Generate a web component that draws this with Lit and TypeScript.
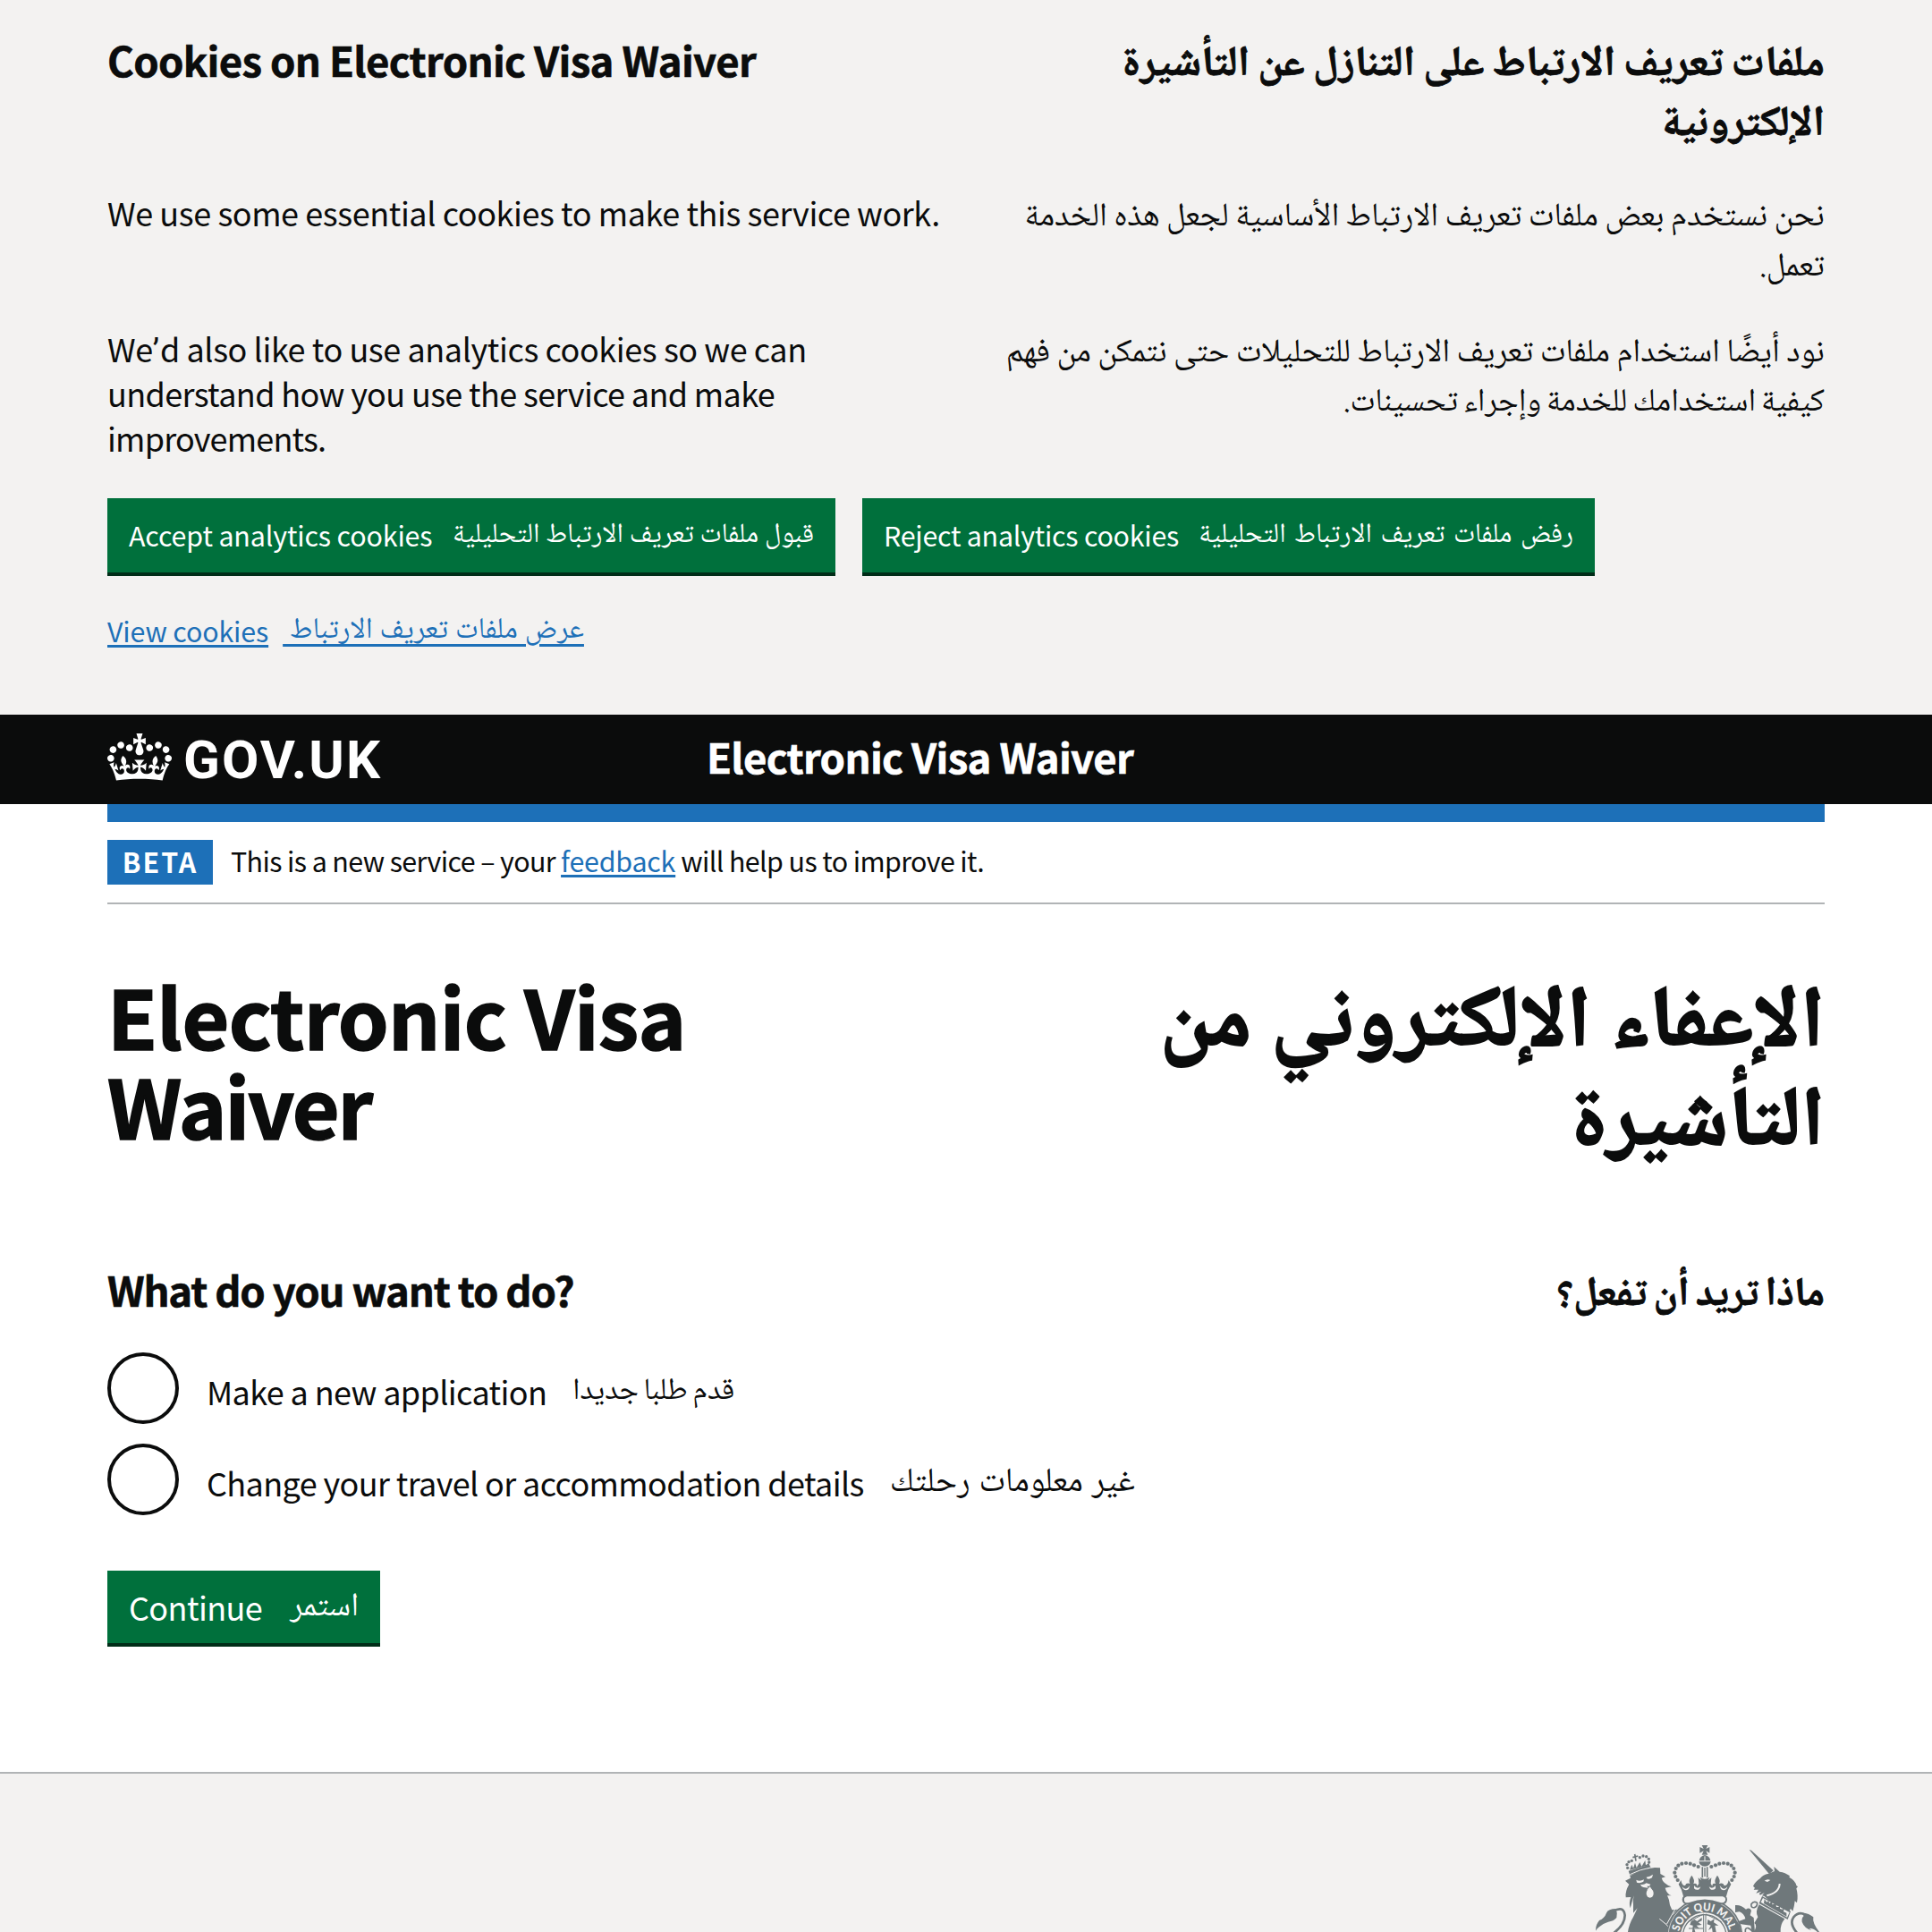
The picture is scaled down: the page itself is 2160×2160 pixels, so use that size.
import { LitElement, html, svg, css } from "lit";
import { customElement } from "lit/decorators.js";

@customElement("govuk-crown")
class GovukCrown extends LitElement {
  static styles = css`
    :host { display: block; width: 72px; height: 53px; }
    .crown { display: block; width: 72px; height: 53px; fill: #fff; }
  `;
  render() {
    return html`<svg class="crown" viewBox="0 0 132 97" aria-hidden="true">
      <path fill-rule="evenodd" d="M25 30.2c3.5 1.5 7.7-.2 9.1-3.7 1.5-3.6-.2-7.8-3.9-9.2-3.6-1.4-7.6.3-9.1 3.9-1.4 3.5.3 7.5 3.9 9zM9 39.5c3.6 1.5 7.8-.2 9.2-3.7 1.5-3.6-.2-7.8-3.9-9.1-3.6-1.5-7.6.2-9.1 3.8-1.4 3.5.3 7.5 3.8 9zM4.4 57.2c3.5 1.5 7.7-.2 9.1-3.8 1.5-3.6-.2-7.7-3.9-9.1-3.5-1.5-7.6.3-9.1 3.8-1.4 3.5.3 7.6 3.9 9.1zm38.3-21.4c3.5 1.5 7.7-.2 9.1-3.8 1.5-3.6-.2-7.7-3.9-9.1-3.6-1.5-7.6.3-9.1 3.8-1.3 3.6.4 7.7 3.9 9.1zm64.4-5.6c-3.6 1.5-7.8-.2-9.1-3.7-1.5-3.6.2-7.8 3.8-9.2 3.6-1.4 7.7.3 9.2 3.9 1.3 3.5-.4 7.5-3.9 9zm15.9 9.3c-3.6 1.5-7.7-.2-9.1-3.7-1.5-3.6.2-7.8 3.7-9.1 3.6-1.5 7.7.2 9.2 3.8 1.5 3.5-.3 7.5-3.8 9zm4.7 17.7c-3.6 1.5-7.8-.2-9.2-3.8-1.5-3.6.2-7.7 3.9-9.1 3.6-1.5 7.7.3 9.2 3.8 1.3 3.5-.4 7.6-3.9 9.1zM89.3 35.8c-3.6 1.5-7.8-.2-9.2-3.8-1.4-3.6.2-7.7 3.9-9.1 3.6-1.5 7.7.3 9.2 3.8 1.4 3.6-.3 7.7-3.9 9.1zM69.7 17.7l8.9 4.7V9.3l-8.9 2.8c-.2-.3-.5-.6-.9-.9L72.4 0H59.6l3.5 11.2c-.3.3-.6.5-.9.9l-8.8-2.8v13.1l8.8-4.7c.3.3.6.7.9.9l-5 15.4v.1c-.2.8-.4 1.6-.4 2.4 0 4.1 3.1 7.5 7 8.1h.2c.3 0 .7.1 1 .1.4 0 .7 0 1-.1h.2c4-.6 7.1-4.1 7.1-8.1 0-.8-.1-1.7-.4-2.4V34l-5.1-15.4c.4-.2.7-.6 1-.9zM66 92.8c16.9 0 32.8 1.1 47.1 3.2 4-16.9 8.9-26.7 14-33.5l-9.6-3.4c1 4.9 1.1 7.2 0 10.2-1.5-1.4-3-4.3-4.2-8.7L108.6 76c2.8-2 5-3.2 7.5-3.3-4.4 9.4-10 11.9-13.6 11.2-4.3-.8-6.3-4.6-5.6-7.9 1-4.7 5.7-5.9 8-.5 4.3-8.7-3-11.4-7.6-8.8 7.1-7.2 7.9-13.5 2.1-21.1-8 6.1-8.1 12.3-4.5 20.8-4.7-5.4-12.1-2.5-9.5 6.2 3.4-5.2 7.9-2 7.2 3.1-.6 4.3-6.4 7.8-13.5 7.2-10.3-.9-10.9-8-11.2-13.8 2.5-.5 7.1 1.8 11 7.3L80.2 60c-4.1 4.4-8 5.3-12.3 5.4 1.4-4.4 8-11.6 8-11.6H55.5s6.4 7.2 7.9 11.6c-4.2-.1-8-1-12.3-5.4l1.4 16.4c3.9-5.5 8.5-7.7 10.9-7.3-.3 5.8-.9 12.8-11.1 13.8-7.2.6-12.9-2.9-13.5-7.2-.7-5 3.8-8.3 7.1-3.1 2.7-8.7-4.6-11.6-9.4-6.2 3.7-8.5 3.6-14.7-4.6-20.8-5.8 7.6-5 13.9 2.2 21.1-4.7-2.6-11.9.1-7.7 8.8 2.3-5.5 7.1-4.2 8.1.5.7 3.3-1.3 7.1-5.7 7.9-3.5.7-9-1.8-13.5-11.2 2.5.1 4.7 1.3 7.5 3.3l-4.7-15.4c-1.2 4.4-2.7 7.2-4.3 8.7-1.1-3-.9-5.3 0-10.2l-9.5 3.4c5 6.9 9.9 16.7 14 33.5 14.8-2.1 30.8-3.2 47.7-3.2z"/>
    </svg>`;
  }
}

const dots = (points: number[][], r: number) =>
  points.map(([x, y]) => svg`<circle cx=${x} cy=${y} r=${r} />`);

@customElement("royal-arms")
class RoyalArms extends LitElement {
  static styles = css`
    :host { display: block; width: 260px; height: 100px; }
    .arms { display: block; width: 260px; height: 100px; fill: #6f787b; }
    .light { fill: #f3f2f1; }
    .line { fill: none; stroke: #6f787b; }
    .gap { fill: none; stroke: #f3f2f1; }
    .motto { font: 900 37px "Lato", "Liberation Sans", sans-serif; fill: #f3f2f1; }
  `;
  render() {
    return html`<svg class="arms" viewBox="60 300 780 300" aria-hidden="true">
      <g transform="translate(48 288)">
        <path d="M123 140L141 131L139 124Q170 104 208 98L222 96L240 97L241 117L258 127L245 131Q250 150 278 160L257 164Q262 184 278 190L264 190Q272 205 273 222L280 238L298 236L283 252L298 312H132Q136 285 150 262L164 232L150 248L150 220Q148 208 152 190L140 232Q134 215 142 195L125 196Q122 176 136 152Z"/>
        <path d="M134 107L204 86L209 97L139 122Z"/>
        <path d="M138 104L145 86L150 98L156 80L161 96L172 78L178 92L190 72L192 88L203 80L204 88Z"/>
        <path class="line" stroke-width="5" d="M155 51L159 74M148 62L166 57"/>
        ${dots([[131, 97], [129, 86], [135, 77], [145, 73], [172, 62], [183, 57], [194, 59], [202, 67], [203, 78]], 5)}
        <path class="gap" stroke-width="3" d="M139 119Q172 102 208 96"/>
        <path class="light" d="M160 137Q172 144 186 136L184 143Q172 150 162 146ZM194 128Q206 126 216 119L213 130Q204 136 196 133Z"/>
        <path class="light" d="M174 152Q184 156 194 148L208 152L204 158L196 158L200 164L184 162Q176 160 174 152Z"/>
        <ellipse class="light" cx="206" cy="182" rx="12" ry="15"/>
        <path class="light" d="M196 170L206 160L214 172Z"/>
        <path class="gap" stroke-width="3" d="M238 268Q262 284 282 312M262 286L290 236"/>
        <path d="M24 308Q24 286 36 274L34 274Q54 266 60 248Q66 234 92 234Q98 250 94 264Q84 276 66 278Q46 284 34 296Q28 300 24 308Z"/>
        <path class="line" stroke-width="8" d="M82 243Q118 222 122 256Q122 288 84 316"/>
      </g>
      <g transform="translate(312 288)">
        <circle cx="125" cy="327" r="128"/>
        <circle class="gap" cx="125" cy="327" r="122" stroke-width="2"/>
        <circle class="light" cx="125" cy="327" r="80"/>
        <circle class="line" cx="125" cy="327" r="73" stroke-width="4"/>
        <path class="line" stroke-width="3" d="M70 278L122 252V320M129 320V252L182 278M72 300H120"/>
        <path d="M80 276L92 270L100 276L116 264L116 274L104 280L116 288L98 290L108 300L90 298L94 312H84L86 290L76 288ZM136 270L146 276L158 268L156 280L172 290L160 290L164 312H152L150 298L138 306L146 290L134 286Z"/>
        <path d="M38 152L46 138Q50 158 60 156Q64 146 76 150Q70 138 82 122Q94 138 88 150Q100 146 100 158L106 150L104 130L116 140H136L148 130L146 150L151 158Q151 146 162 150Q156 138 168 122Q180 138 174 150Q188 146 191 156Q202 158 206 138L214 152Q202 170 198 192H54Q50 170 38 152Z"/>
        <path class="light" d="M50 160Q62 176 76 156L72 168Q60 176 52 166ZM90 156Q100 170 112 160L108 168Q98 174 90 166ZM202 160Q190 176 176 156L180 168Q192 176 200 166ZM162 156Q152 170 140 160L144 168Q154 174 162 166Z"/>
        <rect x="50" y="186" width="151" height="34" rx="17"/>
        <path class="light" d="M66 193H186Q197 196 195 206Q190 217 178 213Q126 192 74 213Q58 217 57 206Q55 196 66 193Z"/>
        <path id="garter" fill="none" d="M39 327A86 86 0 0 1 211 327"/>
        <text class="motto" text-anchor="middle" textLength="232" lengthAdjust="spacingAndGlyphs"><textPath href="#garter" startOffset="49%">SOIT QUI MAL</textPath></text>
        ${dots([[25, 113], [28, 126], [35, 138], [29, 99], [37, 89], [49, 83], [63, 81], [77, 83], [90, 88], [104, 93],
          [227, 113], [224, 126], [217, 138], [223, 99], [215, 89], [203, 83], [189, 81], [175, 83], [162, 88], [148, 93]], 6.3)}
        <path d="M107 73Q110 56 126 54Q142 56 145 73Z"/>
        <path d="M106 76H146Q142 92 126 92Q110 92 106 76Z"/>
        <path class="gap" stroke-width="3" d="M126 58V74"/>
        <path d="M116 21H136L130 33L142 27V47L130 40L136 53H116L122 40L109 47V27L122 33Z"/>
        <path class="line" stroke-width="5" d="M118 94V130M134 94V130"/>
        <path class="line" stroke-width="4" d="M126 96V126"/>
        <path d="M110 128Q126 140 142 128L134 150H118Z"/>
      </g>
      <g transform="translate(540 288)">
        <path d="M47 36L54 38L128 106L114 118Z"/>
        <path d="M112 116L132 108L130 93L149 110Q168 112 183 124L181 128Q202 140 205 156L210 160L205 166Q212 190 207 214L200 208Q198 228 193 242L186 234L178 246Q130 226 98 192L90 190L98 180L84 188L80 184L88 176L70 182L78 170L62 170L66 164L60 158Q66 144 84 132Q92 120 112 116Z"/>
        <path class="light" d="M98 140Q108 132 118 138L108 144Z"/>
        <path class="gap" stroke-width="6" d="M149 150Q148 180 106 190"/>
        <path d="M90 192L186 242L176 270L80 216Z"/>
        <path class="light" d="M93 198L182 246L174 263L86 212Z"/>
        <path d="M96 216L98 202L106 212L112 206L114 216L120 212L124 208L124 220L132 218L136 214L138 228L146 228L150 224L150 234L158 236L164 232L162 244L172 248L172 260Z"/>
        <path d="M80 220L166 268Q150 288 152 312H62Q76 290 64 282L76 262Q66 244 80 220Z"/>
        <path class="line" stroke-width="5" d="M74 214Q62 206 54 218Q52 232 64 230Q74 228 74 214M60 312Q40 290 34 304V312"/>
        <path d="M0 222Q20 220 36 236Q48 228 54 240L50 256L62 264L66 312H56L52 290L20 286L6 278L34 268Q30 250 14 244L0 246ZM0 272L14 286L20 312H12L0 292Z"/>
        <path class="line" stroke-width="8" d="M208 316Q180 284 196 262Q212 242 236 254"/>
        <path d="M222 250Q242 246 262 262Q258 282 282 312H276Q262 298 248 300L256 306Q232 300 224 278Q222 264 230 258Z"/>
      </g>
    </svg>`;
  }
}

@customElement("app-root")
class AppRoot extends LitElement {
  static styles = css`
    :host {
      display: block;
      height: 2160px;
      overflow: hidden;
      background: #fff;
      color: #0b0c0c;
      font: 400 36px/50px "Noto Sans CJK SC", "Roboto", sans-serif;
    }
    .wrap { margin: 0 120px; }
    .row { display: flex; justify-content: space-between; align-items: flex-start; }
    .line { display: block; white-space: nowrap; }
    .quote { font-family: "Roboto", sans-serif; line-height: 0; letter-spacing: 1px; }

    /* Arabic copy */
    .ar {
      font-family: "Noto Naskh Arabic", "DejaVu Sans", serif;
      direction: rtl;
      white-space: nowrap;
      letter-spacing: 0;
    }
    .ar.medium { font-size: 47px; line-height: 67px; padding-top: 3px; word-spacing: -1.2px; -webkit-text-stroke: 0.8px currentColor; }
    .ar.text { font-size: 37px; line-height: 56px; padding-top: 4px; word-spacing: -0.8px; }
    .ar.small { font-size: 31px; line-height: 83px; padding-top: 1px; }
    .ar.xlarge { font-size: 96px; line-height: 112px; padding-top: 8px; -webkit-text-stroke: 2px currentColor; }
    .ar .narrow { font-size: 36px; word-spacing: -2px; }
    .ar .reduced { font-size: 93.5px; }

    /* English copy */
    .medium { font-size: 45.5px; font-weight: 700; line-height: 56px; letter-spacing: -0.67px; white-space: nowrap; -webkit-text-stroke: 0.6px currentColor; }
    .text { letter-spacing: -0.42px; white-space: nowrap; }
    .text .snug { letter-spacing: -0.64px; }
    .text .tight { letter-spacing: -0.8px; }
    .small { font-size: 30.4px; line-height: 83px; letter-spacing: -0.14px; white-space: nowrap; }
    .xlarge { font-size: 91px; font-weight: 700; line-height: 100px; letter-spacing: -0.6px; white-space: nowrap; -webkit-text-stroke: 1.6px currentColor; }
    .xlarge .tight { letter-spacing: -2.1px; }

    /* Cookie banner */
    .banner { height: 799px; box-sizing: border-box; padding-top: 38px; background: #f3f2f1; }
    .banner-title { height: 174px; }
    .banner-essential { height: 152px; }
    .banner-analytics { height: 193px; }
    .buttons { display: flex; gap: 30px; height: 107px; }
    .button {
      display: flex;
      justify-content: space-between;
      align-items: flex-start;
      box-sizing: border-box;
      height: 87px;
      padding: 0 24px;
      background: #00703c;
      border-bottom: 4px solid #002d18;
      color: #fff;
    }
    .accept { width: 814px; }
    .reject { width: 819px; }
    .reject .small { letter-spacing: -0.24px; }
    .reject .ar.small { letter-spacing: 0; word-spacing: 2.7px; }
    .links { display: flex; gap: 16px; }
    .link { color: #1d70b8; text-decoration: underline; text-decoration-thickness: 3px; text-underline-offset: 3px; }
    .ar.link { font-size: 33px; text-underline-offset: 7px; word-spacing: 0.7px; }

    /* Header */
    .header { height: 100px; background: #0b0c0c; color: #fff; }
    .header-row { display: flex; padding-top: 21px; }
    .logo { font: 700 60px/60px "Roboto", sans-serif; letter-spacing: 2.1px; margin-left: 13px; width: 585px; }
    .service { line-height: 50px; }
    .bar { height: 20px; background: #1d70b8; }

    /* Phase banner */
    .phase { display: flex; align-items: center; height: 90px; border-bottom: 2px solid #b1b4b6; }
    .phase .small { line-height: 47px; height: 50px; letter-spacing: -0.6px; }
    .phase .tag {
      width: 118px;
      line-height: 49px;
      background: #1d70b8;
      color: #fff;
      text-align: center;
      font-weight: 700;
      letter-spacing: 2px;
      margin-right: 20px;
    }
    .phase .link { letter-spacing: -0.2px; margin: 0 6px; }

    /* Page content */
    .title { padding-top: 73px; height: 402px; box-sizing: border-box; }
    .question { height: 99px; }
    .question .medium { letter-spacing: -1.2px; }
    .question .ar.medium { font-size: 45px; letter-spacing: 0; word-spacing: -2.7px; }
    .radio { display: flex; height: 102px; }
    .circle { width: 80px; height: 80px; box-sizing: border-box; border: 4px solid #0b0c0c; border-radius: 50%; margin-right: 31px; }
    .radio .text { padding-top: 18px; letter-spacing: -0.62px; }
    .radio .ar.text { padding-top: 17px; margin-left: 29px; letter-spacing: 0; font-size: 38px; word-spacing: 1.5px; }
    .radio .ar.compact { font-size: 34px; word-spacing: -2px; }
    .continue { width: 305px; height: 85px; margin-top: 40px; }
    .continue .text { padding-top: 15px; letter-spacing: -0.6px; }
    .continue .ar.text { padding-top: 14px; letter-spacing: 0; }

    .footer {
      height: 179px;
      margin-top: 140px;
      border-top: 2px solid #b1b4b6;
      background: #f3f2f1;
      display: flex;
      justify-content: flex-end;
      padding: 77px 120px 0;
      box-sizing: border-box;
    }
  `;
  render() {
    return html`
      <div class="banner">
        <div class="wrap">
          <div class="row banner-title">
            <div class="medium">Cookies on Electronic Visa Waiver</div>
            <div class="ar medium" lang="ar">
              <span class="line">ملفات تعريف الارتباط على التنازل عن التأشيرة</span>
              <span class="line">الإلكترونية</span>
            </div>
          </div>
          <div class="row banner-essential">
            <div class="text">We use some essential cookies to make this service work.</div>
            <div class="ar text" lang="ar">
              <span class="line">نحن نستخدم بعض ملفات تعريف الارتباط الأساسية لجعل هذه الخدمة</span>
              <span class="line">تعمل.</span>
            </div>
          </div>
          <div class="row banner-analytics">
            <div class="text">
              <span class="line">We<span class="quote">’</span>d also like to use analytics cookies so we can</span>
              <span class="line snug">understand how you use the service and make</span>
              <span class="line tight">improvements.</span>
            </div>
            <div class="ar text" lang="ar">
              <span class="line">نود أيضًا استخدام ملفات تعريف الارتباط للتحليلات حتى نتمكن من فهم</span>
              <span class="line narrow">كيفية استخدامك للخدمة وإجراء تحسينات.</span>
            </div>
          </div>
          <div class="buttons">
            <div class="button accept" role="button">
              <span class="small">Accept analytics cookies</span>
              <span class="ar small" lang="ar">قبول ملفات تعريف الارتباط التحليلية</span>
            </div>
            <div class="button reject" role="button">
              <span class="small">Reject analytics cookies</span>
              <span class="ar small" lang="ar">رفض ملفات تعريف الارتباط التحليلية</span>
            </div>
          </div>
          <div class="links">
            <a class="link small">View cookies</a>
            <a class="link ar small" lang="ar">عرض ملفات تعريف الارتباط&nbsp;</a>
          </div>
        </div>
      </div>
      <div class="header">
        <div class="wrap header-row">
          <govuk-crown></govuk-crown>
          <span class="logo">GOV.UK</span>
          <span class="medium service">Electronic Visa Waiver</span>
        </div>
      </div>
      <div class="wrap">
        <div class="bar"></div>
        <div class="phase">
          <span class="small tag">BETA</span>
          <span class="small">This is a new service – your</span>
          <a class="small link">feedback</a>
          <span class="small">will help us to improve it.</span>
        </div>
        <div class="row title">
          <div class="xlarge">
            <span class="line">Electronic Visa</span>
            <span class="line tight">Waiver</span>
          </div>
          <div class="ar xlarge" lang="ar">
            <span class="line">الإعفاء الإلكتروني من</span>
            <span class="line reduced">التأشيرة</span>
          </div>
        </div>
        <div class="row question">
          <div class="medium">What do you want to do?</div>
          <div class="ar medium" lang="ar">ماذا تريد أن تفعل؟</div>
        </div>
        <div class="radio">
          <div class="circle"></div>
          <span class="text">Make a new application</span>
          <span class="ar text compact" lang="ar">قدم طلبا جديدا</span>
        </div>
        <div class="radio">
          <div class="circle"></div>
          <span class="text">Change your travel or accommodation details</span>
          <span class="ar text" lang="ar">غير معلومات رحلتك</span>
        </div>
        <div class="button continue" role="button">
          <span class="text">Continue</span>
          <span class="ar text" lang="ar">استمر</span>
        </div>
      </div>
      <div class="footer"><royal-arms></royal-arms></div>
    `;
  }
}
